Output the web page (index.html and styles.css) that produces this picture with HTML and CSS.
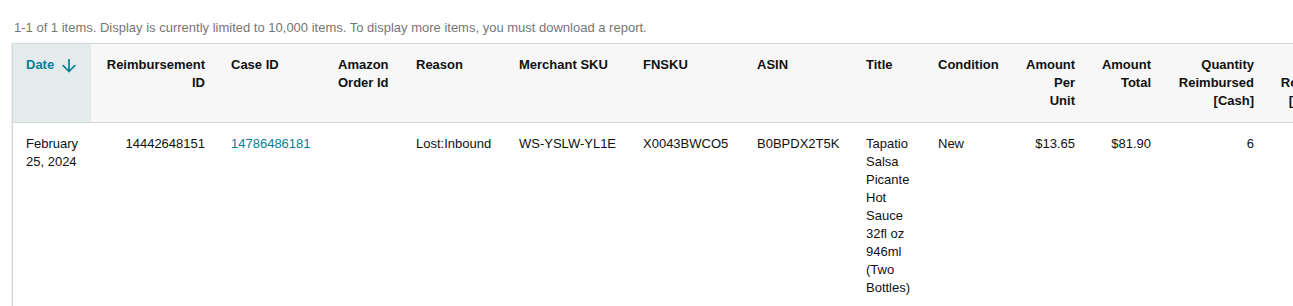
FILE: index.html
```html
<!DOCTYPE html>
<html>
<head>
<meta charset="utf-8">
<link rel="stylesheet" href="styles.css">
</head>
<body>
<div class="page">
  <div class="summary">1-1 of 1 items. Display is currently limited to 10,000 items. To display more items, you must download a report.</div>
  <div class="table-wrap">
    <table class="grid">
      <colgroup>
        <col class="c-date"><col class="c-reimb"><col class="c-case"><col class="c-order"><col class="c-reason"><col class="c-msku"><col class="c-fnsku"><col class="c-asin"><col class="c-title"><col class="c-cond"><col class="c-apu"><col class="c-at"><col class="c-qty"><col class="c-next">
      </colgroup>
      <thead>
        <tr>
          <th class="sorted"><span class="sort-label">Date <svg class="sort-icon" width="14" height="15" viewBox="0 0 14 15"><path d="M7 1.5V13.5M1.2 7.7L7 13.5l5.8-5.8" fill="none" stroke="#0a7f94" stroke-width="1.7" stroke-linecap="round" stroke-linejoin="round"/></svg></span></th>
          <th class="num">Reimbursement ID</th>
          <th>Case ID</th>
          <th>Amazon Order Id</th>
          <th>Reason</th>
          <th>Merchant SKU</th>
          <th>FNSKU</th>
          <th>ASIN</th>
          <th>Title</th>
          <th>Condition</th>
          <th class="num">Amount Per Unit</th>
          <th class="num">Amount Total</th>
          <th class="num">Quantity Reimbursed [Cash]</th>
          <th class="num">Quantity Reimbursed [Inventory]</th>
        </tr>
      </thead>
      <tbody>
        <tr>
          <td>February 25, 2024</td>
          <td class="num">14442648151</td>
          <td><a class="link" href="#">14786486181</a></td>
          <td></td>
          <td>Lost:Inbound</td>
          <td>WS-YSLW-YL1E</td>
          <td>X0043BWCO5</td>
          <td>B0BPDX2T5K</td>
          <td>Tapatio Salsa Picante Hot Sauce 32fl oz 946ml (Two Bottles)</td>
          <td>New</td>
          <td class="num">$13.65</td>
          <td class="num">$81.90</td>
          <td class="num">6</td>
          <td class="num">0</td>
        </tr>
      </tbody>
    </table>
  </div>
</div>
</body>
</html>
```

FILE: styles.css
```css
html, body {
  margin: 0;
  padding: 0;
  background: #ffffff;
}
body {
  font-family: Arial, "Liberation Sans", sans-serif;
  font-size: 13px;
  line-height: 18px;
  color: #0f1111;
  overflow: hidden;
}
.page {
  padding: 19px 0 0 12px;
}
.summary {
  color: #767676;
  font-size: 13px;
  line-height: 18px;
  padding-left: 2px;
  margin-bottom: 6px;
}
.table-wrap {
  overflow: hidden;
  border-top: 1px solid #d5d9d9;
  border-left: 1px solid #d5d9d9;
  box-shadow: -1px 0 0 #eeeeee;
  height: 300px;
}
.grid {
  border-collapse: collapse;
  table-layout: fixed;
  width: 1356px;
}
.c-date { width: 78px; }
.c-reimb { width: 127px; }
.c-case { width: 107px; }
.c-order { width: 78px; }
.c-reason { width: 103px; }
.c-msku { width: 124px; }
.c-fnsku { width: 114px; }
.c-asin { width: 109px; }
.c-title { width: 72px; }
.c-cond { width: 88px; }
.c-apu { width: 75px; }
.c-at { width: 76px; }
.c-qty { width: 103px; }
.c-next { width: 102px; }
th, td {
  padding: 12px 13px;
  vertical-align: top;
  text-align: left;
}
th {
  background: #f7f7f7;
  font-weight: bold;
  color: #0f1111;
  border-bottom: 1px solid #d5d9d9;
}
thead tr {
  height: 78px;
}
th.sorted {
  background: #e3ebec;
  color: #0a7f94;
}
.sort-label {
  display: inline-flex;
  align-items: center;
  gap: 8px;
  white-space: nowrap;
}
.sort-icon {
  display: block;
}
.num {
  text-align: right;
}
td {
  color: #0f1111;
}
.link {
  color: #0a7f94;
  text-decoration: none;
}
```
